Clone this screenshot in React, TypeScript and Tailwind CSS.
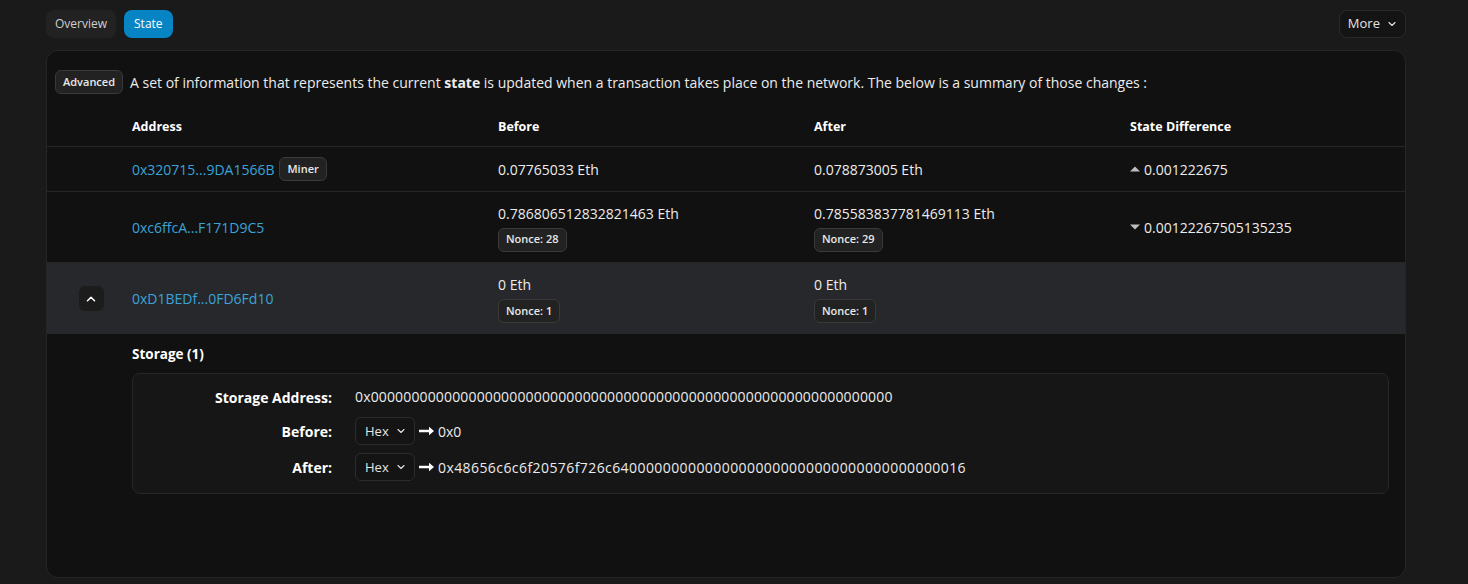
import { ChevronDown, ChevronUp } from 'lucide-react';

const font = { fontFamily: '"Open Sans", "Noto Sans", sans-serif' };

function Tag({ label }: { label: string }) {
  return (
    <span className="inline-flex h-[24px] items-center rounded-md border border-[#3a3a3a] bg-[#222] px-[7px] text-[11px] font-semibold text-[#e8e8e8]">
      {label}
    </span>
  );
}

function Caret({ up }: { up?: boolean }) {
  return (
    <svg width="10" height="6" viewBox="0 0 10 6" className="mr-[2px] text-[#bdbdbd]">
      <path d={up ? 'M0 5.5 L5 0.5 L10 5.5 Z' : 'M0 0.5 L5 5.5 L10 0.5 Z'} fill="currentColor" />
    </svg>
  );
}

function Arrow() {
  return (
    <svg width="15" height="10" viewBox="0 0 15 10" className="mx-[4px] text-white">
      <path d="M0 3.8h10V0.8l5 4.2-5 4.2V6.2H0z" fill="currentColor" />
    </svg>
  );
}

function HexSelect() {
  return (
    <span className="inline-flex h-[28px] w-[60px] items-center justify-between rounded-md border border-[#2c2c2c] bg-[#141414] pl-[9px] pr-[7px] text-[13px] text-[#e5e5e5]">
      Hex
      <ChevronDown className="h-3 w-3" strokeWidth={2.2} />
    </span>
  );
}

const rows = [
  {
    address: '0x320715...9DA1566B',
    miner: true,
    before: '0.07765033 Eth',
    after: '0.078873005 Eth',
    diff: '0.001222675',
    up: true,
  },
  {
    address: '0xc6ffcA...F171D9C5',
    before: '0.786806512832821463 Eth',
    beforeNonce: 'Nonce: 28',
    after: '0.785583837781469113 Eth',
    afterNonce: 'Nonce: 29',
    diff: '0.00122267505135235',
  },
];

const cols = 'grid grid-cols-[85px_366px_316px_316px_1fr]';

export default function App() {
  return (
    <div className="min-h-[584px] w-full bg-[#1a1a1a] text-[#ececec]" style={font}>
      <div className="ml-[46px] w-[1360px] pt-[10px]">
        <div className="flex items-center justify-between">
          <div className="flex gap-[8px]">
            <button className="h-[28px] rounded-lg bg-[#222222] px-[9px] text-[12px] font-medium text-[#cfcfcf]">
              Overview
            </button>
            <button className="h-[28px] rounded-lg bg-[#0784c4] px-[10px] text-[12px] font-medium text-white">
              State
            </button>
          </div>
          <button className="flex h-[28px] items-center gap-[6px] rounded-lg border border-[#2a2a2a] bg-[#141414] pl-[8px] pr-[7px] text-[13px] text-[#e5e5e5]">
            More
            <ChevronDown className="h-3 w-3" strokeWidth={2.2} />
          </button>
        </div>

        <div className="mt-[12px] h-[528px] overflow-hidden rounded-xl border border-[#262626] bg-[#111111]">
          <div className="flex items-center gap-[7px] px-[8px] pt-[19px]">
            <Tag label="Advanced" />
            <p className="text-[14px] text-[#ececec]">
              A set of information that represents the current <b>state</b> is updated when a transaction takes
              place on the network. The below is a summary of those changes :
            </p>
          </div>

          <div className={`${cols} mt-[24px] h-[29px] items-start border-b border-[#262626] text-[12.5px] font-bold text-white`}>
            <span />
            <span>Address</span>
            <span>Before</span>
            <span>After</span>
            <span>State Difference</span>
          </div>

          {rows.map((r) => (
            <div
              key={r.address}
              className={`${cols} ${r.beforeNonce ? 'h-[71px]' : 'h-[45px]'} items-center border-b border-[#262626] text-[14px]`}
            >
              <span />
              <span className="flex items-center gap-[5px]">
                <span className="text-[#3aa4d9]">{r.address}</span>
                {r.miner && <Tag label="Miner" />}
              </span>
              <span className="flex flex-col items-start gap-[4px]">
                <span>{r.before}</span>
                {r.beforeNonce && <Tag label={r.beforeNonce} />}
              </span>
              <span className="flex flex-col items-start gap-[4px]">
                <span>{r.after}</span>
                {r.afterNonce && <Tag label={r.afterNonce} />}
              </span>
              <span className="flex items-center gap-[2px]">
                <Caret up={r.up} />
                {r.diff}
              </span>
            </div>
          ))}

          <div className={`${cols} h-[71px] items-center bg-[#27282b] text-[14px]`}>
            <span className="flex justify-center pl-[3px]">
              <span className="flex h-[25px] w-[25px] items-center justify-center rounded-md bg-[#1c1c1c]">
                <ChevronUp className="h-[14px] w-[14px] text-white" strokeWidth={2.6} />
              </span>
            </span>
            <span className="text-[#3aa4d9]">0xD1BEDf...0FD6Fd10</span>
            <span className="flex flex-col items-start gap-[4px]">
              <span>0 Eth</span>
              <Tag label="Nonce: 1" />
            </span>
            <span className="flex flex-col items-start gap-[4px]">
              <span>0 Eth</span>
              <Tag label="Nonce: 1" />
            </span>
            <span />
          </div>

          <div className="pl-[85px] pr-[16px] pt-[10px]">
            <h3 className="text-[13.5px] font-bold text-white">Storage (1)</h3>
            <div className="mt-[9px] grid grid-cols-[199px_1fr] items-center gap-x-[23px] gap-y-[8px] rounded-lg border border-[#272727] bg-[#161616] pb-[12px] pt-[11px] text-[14px]">
              <span className="text-right font-bold text-white">Storage Address:</span>
              <span className="h-[24px] leading-[24px] tracking-[0.15px]">
                0x0000000000000000000000000000000000000000000000000000000000000000
              </span>
              <span className="text-right font-bold text-white">Before:</span>
              <span className="flex items-center">
                <HexSelect />
                <Arrow />
                0x0
              </span>
              <span className="text-right font-bold text-white">After:</span>
              <span className="flex items-center">
                <HexSelect />
                <Arrow />
                <span className="tracking-[0.42px]">
                  0x48656c6c6f20576f726c640000000000000000000000000000000000000016
                </span>
              </span>
            </div>
          </div>
        </div>
      </div>
    </div>
  );
}
